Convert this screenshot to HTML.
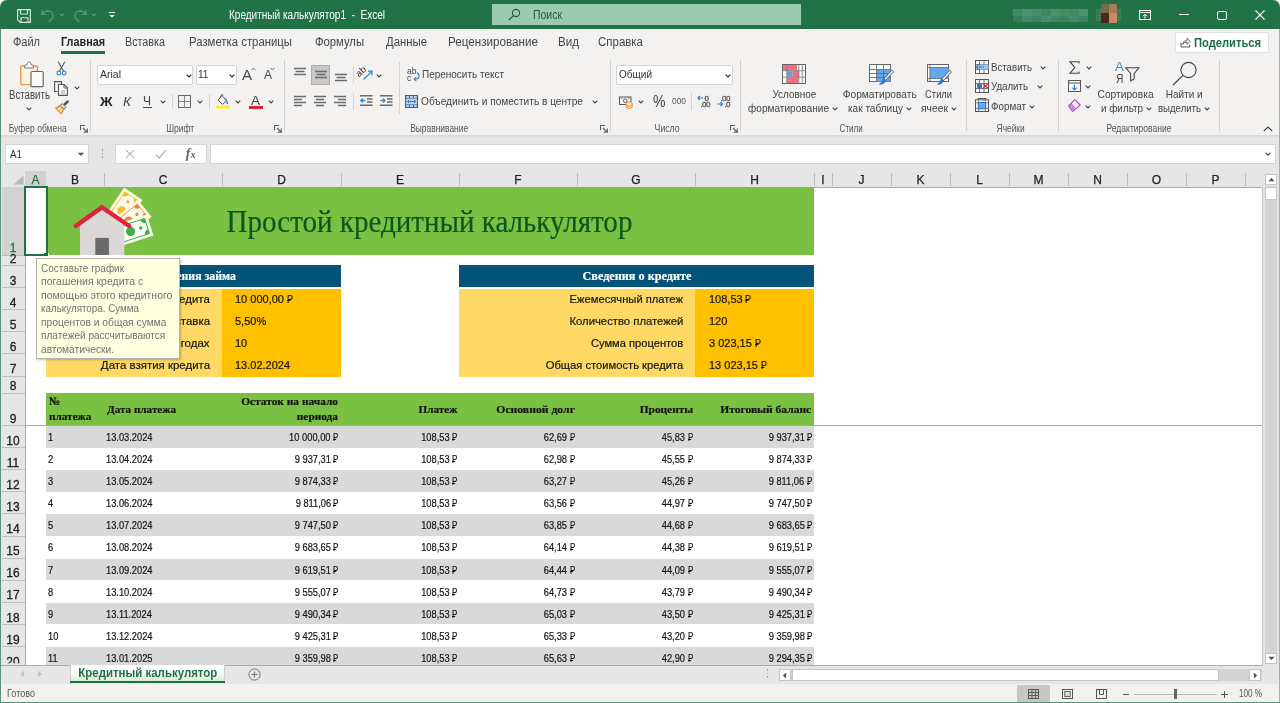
<!DOCTYPE html>
<html><head><meta charset="utf-8"><title>Excel</title>
<style>
*{box-sizing:border-box;margin:0;padding:0}
html,body{width:1280px;height:703px;overflow:hidden;background:#fff}
body{font-family:"Liberation Sans",sans-serif;font-size:12px;color:#262626;position:relative}
.a{position:absolute}
.t{position:absolute;white-space:pre;line-height:1}
.d .t{-webkit-text-stroke:0.2px}
svg{position:absolute;overflow:visible}
.rub{position:relative;display:inline-block}
.rub:after{content:"";position:absolute;left:-0.02em;width:0.42em;bottom:0.33em;height:0.09em;min-height:0.9px;background:currentColor}
</style></head><body><div id="root" style="position:absolute;left:0;top:0;width:1280px;height:703px;will-change:transform;">

<div class="a" style="left:0px;top:0px;width:1280px;height:703px;background:#e6e6e6;"></div>
<div class="a" style="left:0px;top:0px;width:1280px;height:30px;background:#fff;"></div>
<div class="a" style="left:0px;top:0px;width:1280px;height:30px;background:#217346;border-radius:7px 7px 0 0"></div>
<div class="a" style="left:0px;top:29px;width:1280px;height:107px;background:#f3f2f1;"></div>
<div class="a" style="left:0px;top:135px;width:1280px;height:1px;background:#dad9d8;"></div>
<div class="a" style="left:0px;top:136px;width:1280px;height:1px;background:#dedede;"></div>
<div class="a" style="left:0px;top:137px;width:1280px;height:1px;background:#e2e2e2;"></div>
<svg style="left:17px;top:9px" width="14" height="14" viewBox="0 0 14 14"><path d="M0.6 0.6 H13.4 V13.4 H3.2 L0.6 10.8 Z" fill="none" stroke="#d6ede0" stroke-width="1.15" stroke-linejoin="round"/><path d="M3.5 0.6 V5 H10.5 V0.6 M4 13.4 V8.8 H11 V13.4" fill="none" stroke="#d6ede0" stroke-width="1.1"/></svg>
<svg style="left:41px;top:9px" width="13" height="13" viewBox="0 0 13 13"><path d="M1 1 V5.5 H5.5" fill="none" stroke="#5ea27d" stroke-width="1.2"/><path d="M1.3 5.3 Q4 1.5 8 2 Q12 3 12 7 Q12 10 7.5 12.5" fill="none" stroke="#5ea27d" stroke-width="1.2"/></svg>
<svg style="left:58px;top:12px" width="8" height="6" viewBox="0 0 8 6"><path d="M1.9 1.7 L4 3.8 L6.1 1.7" fill="none" stroke="#5ea27d" stroke-width="1.1"/></svg>
<svg style="left:74px;top:9px" width="13" height="13" viewBox="0 0 13 13"><path d="M12 1 V5.5 H7.5" fill="none" stroke="#5ea27d" stroke-width="1.2"/><path d="M11.7 5.3 Q9 1.5 5 2 Q1 3 1 7 Q1 10 5.5 12.5" fill="none" stroke="#5ea27d" stroke-width="1.2"/></svg>
<svg style="left:90px;top:12px" width="8" height="6" viewBox="0 0 8 6"><path d="M1.9 1.7 L4 3.8 L6.1 1.7" fill="none" stroke="#5ea27d" stroke-width="1.1"/></svg>
<svg style="left:108px;top:11px" width="8" height="8" viewBox="0 0 8 8"><path d="M1 1.5 H7" stroke="#fff" stroke-width="1.1"/><path d="M1.2 4 L4 6.8 L6.8 4 Z" fill="#fff"/></svg>
<div class="t" style="left:229.00px;top:8.64px;font-size:12px;color:#fff;transform:scaleX(0.8356);transform-origin:0 0;">Кредитный калькулятор1  -  Excel</div>
<div class="a" style="left:492px;top:4px;width:309px;height:21px;background:#9ccab0;"></div>
<svg style="left:508px;top:8px" width="13" height="13" viewBox="0 0 13 13"><circle cx="8" cy="5" r="3.6" fill="none" stroke="#1e5c3a" stroke-width="1.1"/><path d="M5.4 7.6 L1 12" stroke="#1e5c3a" stroke-width="1.2"/></svg>
<div class="t" style="left:533.00px;top:8.84px;font-size:12px;color:#1e5c3a;transform:scaleX(0.8721);transform-origin:0 0;">Поиск</div>
<div class="a" style="left:1013px;top:9px;width:9.5px;height:7px;background:#3f8a62;"></div>
<div class="a" style="left:1013px;top:16px;width:9.5px;height:6px;background:#387f59;"></div>
<div class="a" style="left:1022.4px;top:9px;width:9.5px;height:7px;background:#4c9470;"></div>
<div class="a" style="left:1022.4px;top:16px;width:9.5px;height:6px;background:#43896a;"></div>
<div class="a" style="left:1031.8px;top:9px;width:9.5px;height:7px;background:#468f6a;"></div>
<div class="a" style="left:1031.8px;top:16px;width:9.5px;height:6px;background:#3b8460;"></div>
<div class="a" style="left:1041.2px;top:9px;width:9.5px;height:7px;background:#3d8860;"></div>
<div class="a" style="left:1041.2px;top:16px;width:9.5px;height:6px;background:#468f6a;"></div>
<div class="a" style="left:1050.6px;top:9px;width:9.5px;height:7px;background:#4a936e;"></div>
<div class="a" style="left:1050.6px;top:16px;width:9.5px;height:6px;background:#3f8a62;"></div>
<div class="a" style="left:1060px;top:9px;width:9.5px;height:7px;background:#43905f;"></div>
<div class="a" style="left:1060px;top:16px;width:9.5px;height:6px;background:#3b8460;"></div>
<div class="a" style="left:1069.4px;top:9px;width:9.5px;height:7px;background:#3f8a62;"></div>
<div class="a" style="left:1069.4px;top:16px;width:9.5px;height:6px;background:#43896a;"></div>
<div class="a" style="left:1078.8px;top:9px;width:9.5px;height:7px;background:#4a936e;"></div>
<div class="a" style="left:1078.8px;top:16px;width:9.5px;height:6px;background:#3a835c;"></div>
<div class="a" style="left:1101px;top:4px;width:8px;height:9px;background:#7b6a4a;"></div>
<div class="a" style="left:1109px;top:4px;width:8px;height:9px;background:#a87c55;"></div>
<div class="a" style="left:1101px;top:13px;width:8px;height:10px;background:#4a2a1c;"></div>
<div class="a" style="left:1109px;top:13px;width:8px;height:10px;background:#c98a60;"></div>
<div class="a" style="left:1096px;top:9px;width:5px;height:12px;background:#3c7c58;"></div>
<div class="a" style="left:1117px;top:9px;width:4px;height:12px;background:#3c7c58;"></div>
<svg style="left:1139px;top:10px" width="12" height="10" viewBox="0 0 12 10"><rect x="0.5" y="0.5" width="11" height="9" fill="none" stroke="#fff" stroke-width="1"/><path d="M0.5 2.5 H11.5" stroke="#fff" stroke-width="1"/><path d="M6 8.5 V4.5 M4 6.2 L6 4.2 L8 6.2" fill="none" stroke="#fff" stroke-width="1"/></svg>
<div class="a" style="left:1179px;top:14px;width:10px;height:1px;background:#fff;"></div>
<div class="a" style="left:1217px;top:10.5px;width:9.5px;height:9px;border:1px solid #fff;border-radius:2px"></div>
<svg style="left:1255px;top:10px" width="10" height="10" viewBox="0 0 10 10"><path d="M0.5 0.5 L9.5 9.5 M9.5 0.5 L0.5 9.5" stroke="#fff" stroke-width="1.1"/></svg>
<div class="t" style="left:13.00px;top:36.02px;font-size:12.5px;color:#444444;transform:scaleX(0.8786);transform-origin:0 0;">Файл</div>
<div class="t" style="left:61.00px;top:36.02px;font-size:12.5px;color:#252525;font-weight:bold;transform:scaleX(0.8655);transform-origin:0 0;">Главная</div>
<div class="t" style="left:125.00px;top:36.02px;font-size:12.5px;color:#444444;transform:scaleX(0.8610);transform-origin:0 0;">Вставка</div>
<div class="t" style="left:189.00px;top:36.02px;font-size:12.5px;color:#444444;transform:scaleX(0.9083);transform-origin:0 0;">Разметка страницы</div>
<div class="t" style="left:315.00px;top:36.02px;font-size:12.5px;color:#444444;transform:scaleX(0.9008);transform-origin:0 0;">Формулы</div>
<div class="t" style="left:386.00px;top:36.02px;font-size:12.5px;color:#444444;transform:scaleX(0.9079);transform-origin:0 0;">Данные</div>
<div class="t" style="left:448.00px;top:36.02px;font-size:12.5px;color:#444444;transform:scaleX(0.9324);transform-origin:0 0;">Рецензирование</div>
<div class="t" style="left:558.00px;top:36.02px;font-size:12.5px;color:#444444;transform:scaleX(0.9286);transform-origin:0 0;">Вид</div>
<div class="t" style="left:598.00px;top:36.02px;font-size:12.5px;color:#444444;transform:scaleX(0.9177);transform-origin:0 0;">Справка</div>
<div class="a" style="left:61px;top:51px;width:44px;height:2.5px;background:#217346;"></div>
<div class="a" style="left:1174.5px;top:32px;width:94px;height:20.5px;background:#fff;border:1px solid #e3e1df;border-radius:2px"></div>
<svg style="left:1180px;top:37px" width="11" height="11" viewBox="0 0 11 11"><path d="M1 5.5 V10 H9.5 V8" fill="none" stroke="#555" stroke-width="1"/><path d="M2.5 7.5 Q3 3.5 7 3.5 V1.2 L10.3 4.5 L7 7.3 V5.3 Q4 5.2 2.5 7.5 Z" fill="none" stroke="#555" stroke-width="0.9"/></svg>
<div class="t" style="left:1194.00px;top:36.84px;font-size:12px;color:#1e6e42;font-weight:bold;transform:scaleX(0.9303);transform-origin:0 0;">Поделиться</div>
<svg style="left:20px;top:61px" width="24" height="27" viewBox="0 0 24 27">
<rect x="0.8" y="5" width="16.6" height="18.6" rx="1" fill="#fdf1df" stroke="#e09a4e" stroke-width="1.4"/>
<path d="M4.8 7 V4.8 Q4.8 4 5.6 4 H6.8 Q7.3 0.8 9.1 0.8 Q10.9 0.8 11.4 4 H12.6 Q13.4 4 13.4 4.8 V7 Z" fill="#fafafa" stroke="#777" stroke-width="1"/>
<rect x="11" y="10.5" width="12.2" height="15.2" rx="1" fill="#fafafa" stroke="#666" stroke-width="1.2"/>
</svg>
<div class="t" style="left:4.07px;top:88.84px;font-size:12px;color:#444444;transform:scaleX(0.8060);transform-origin:50% 0;">Вставить</div>
<svg style="left:25px;top:105.5px" width="8" height="6" viewBox="0 0 8 6"><path d="M1.7 1.7 L4 4.0 L6.3 1.7" fill="none" stroke="#444" stroke-width="1.1"/></svg>
<svg style="left:56px;top:61px" width="11" height="15" viewBox="0 0 11 15"><path d="M2.2 0.8 L7.6 10.2 M8.8 0.8 L3.4 10.2" stroke="#555" stroke-width="1.1" fill="none"/>
<circle cx="2.9" cy="12" r="1.9" fill="none" stroke="#3a8bd8" stroke-width="1.1"/><circle cx="8.1" cy="12" r="1.9" fill="none" stroke="#3a8bd8" stroke-width="1.1"/></svg>
<svg style="left:54px;top:81px" width="15" height="15" viewBox="0 0 15 15"><path d="M3.5 10.5 H0.6 V0.6 H7.5 V3" fill="none" stroke="#555" stroke-width="1.1"/>
<path d="M4.5 3.5 H10.2 L13.4 6.7 V14.4 H4.5 Z" fill="#fafafa" stroke="#555" stroke-width="1.1"/><path d="M10 3.7 V7 H13.2" fill="none" stroke="#555" stroke-width="1"/><path d="M7 10 H11 M7 12 H11" stroke="#888" stroke-width="0.8"/></svg>
<svg style="left:72.5px;top:85px" width="8" height="6" viewBox="0 0 8 6"><path d="M1.7 1.7 L4 4.0 L6.3 1.7" fill="none" stroke="#444" stroke-width="1.1"/></svg>
<svg style="left:55px;top:100px" width="14" height="15" viewBox="0 0 14 15"><path d="M12.6 1.6 L10 4.2" stroke="#555" stroke-width="2.6" stroke-linecap="round"/>
<path d="M7.2 3.6 L10.9 7.3 L9.2 9 L5.5 5.3 Z" fill="#f3f2f1" stroke="#555" stroke-width="1"/>
<path d="M5.3 5.6 L9 9.3 L6.2 13.8 L0.6 8.2 Z" fill="#f6c48c" stroke="#e08a2e" stroke-width="1.1" stroke-linejoin="round"/>
<path d="M3 10.6 L5.2 7.6 M4.8 12.4 L7 9.4" stroke="#fdf1df" stroke-width="0.8"/></svg>
<div class="t" style="left:2.33px;top:122.61px;font-size:10.5px;color:#555;transform:scaleX(0.8129);transform-origin:50% 0;">Буфер обмена</div>
<svg style="left:80px;top:124.5px" width="8" height="8" viewBox="0 0 8 8"><path d="M0.5 5 V0.5 H5" fill="none" stroke="#5a5a5a" stroke-width="1.1"/><path d="M3 3 L7 7 M7.3 3.6 V7.3 H3.6" fill="none" stroke="#5a5a5a" stroke-width="1.1"/></svg>
<div class="a" style="left:90px;top:60px;width:1px;height:71px;background:#d2d0ce;"></div>
<div class="a" style="left:97px;top:65px;width:96px;height:20px;background:#fff;border:1px solid #d6d4d2;border-radius:2px"></div>
<div class="t" style="left:100.00px;top:69.47px;font-size:11.5px;color:#333;transform:scaleX(0.9128);transform-origin:0 0;">Arial</div>
<svg style="left:184.5px;top:72.5px" width="8" height="6" viewBox="0 0 8 6"><path d="M1.7 1.7 L4 4.0 L6.3 1.7" fill="none" stroke="#333" stroke-width="1.21"/></svg>
<div class="a" style="left:196px;top:65px;width:41px;height:20px;background:#fff;border:1px solid #d6d4d2;border-radius:2px"></div>
<div class="t" style="left:198.00px;top:69.47px;font-size:11.5px;color:#333;transform:scaleX(0.8795);transform-origin:0 0;">11</div>
<svg style="left:227.5px;top:72.5px" width="8" height="6" viewBox="0 0 8 6"><path d="M1.7 1.7 L4 4.0 L6.3 1.7" fill="none" stroke="#333" stroke-width="1.21"/></svg>
<div class="t" style="left:241.50px;top:66.88px;font-size:15.5px;color:#444;transform:scaleX(0.9673);transform-origin:0 0;">A</div>
<svg style="left:250.5px;top:67px" width="5" height="4" viewBox="0 0 5 4"><path d="M0.6 3.2 L2.5 1.1 L4.4 3.2" fill="none" stroke="#2b7cd3" stroke-width="1"/></svg>
<div class="t" style="left:263.50px;top:69.42px;font-size:12.5px;color:#444;transform:scaleX(0.9595);transform-origin:0 0;">A</div>
<svg style="left:270px;top:67px" width="5" height="4" viewBox="0 0 5 4"><path d="M0.6 0.9 L2.5 3 L4.4 0.9" fill="none" stroke="#2b7cd3" stroke-width="1"/></svg>
<div class="t" style="left:100.00px;top:94.50px;font-size:13px;color:#222;font-weight:bold;transform:scaleX(1.0639);transform-origin:0 0;">Ж</div>
<div class="t" style="left:122.50px;top:94.50px;font-size:13px;color:#444;font-style:italic;transform:scaleX(1.0442);transform-origin:0 0;">К</div>
<div class="t" style="left:143.00px;top:94.00px;font-size:13px;color:#444;transform:scaleX(0.9233);transform-origin:0 0;">Ч</div>
<div class="a" style="left:143px;top:107px;width:9px;height:1px;background:#444;"></div>
<svg style="left:158.5px;top:98.5px" width="8" height="6" viewBox="0 0 8 6"><path d="M1.7 1.7 L4 4.0 L6.3 1.7" fill="none" stroke="#444" stroke-width="1.1"/></svg>
<div class="a" style="left:172px;top:94px;width:1px;height:15px;background:#d6d4d2;"></div>
<svg style="left:178px;top:95px" width="13" height="13" viewBox="0 0 13 13"><rect x="0.5" y="0.5" width="12" height="12" fill="none" stroke="#666" stroke-width="1"/><path d="M6.5 0.5 V12.5 M0.5 6.5 H12.5" stroke="#888" stroke-width="1"/></svg>
<svg style="left:196px;top:98.5px" width="8" height="6" viewBox="0 0 8 6"><path d="M1.7 1.7 L4 4.0 L6.3 1.7" fill="none" stroke="#444" stroke-width="1.1"/></svg>
<div class="a" style="left:209px;top:94px;width:1px;height:15px;background:#d6d4d2;"></div>
<svg style="left:216px;top:93px" width="14" height="17" viewBox="0 0 14 17"><path d="M5.8 2.6 L11 7.6 L6.4 11.4 L2.2 7.2 Z" fill="#fafafa" stroke="#555" stroke-width="1"/>
<path d="M4.2 4.2 L6 1.2 L7.4 2.4" fill="none" stroke="#555" stroke-width="0.9"/>
<path d="M11 7.4 Q12.6 9.2 12.2 10.6 Q11.4 11.6 10.6 10.6 Q10.2 9.2 11 7.4 Z" fill="#2b7cd3"/>
<path d="M8.5 5.2 L10.9 7.6" stroke="#2b7cd3" stroke-width="1.2"/>
<rect x="0" y="12.5" width="14" height="3.1" fill="#ffeb3b"/></svg>
<svg style="left:233.5px;top:98.5px" width="8" height="6" viewBox="0 0 8 6"><path d="M1.7 1.7 L4 4.0 L6.3 1.7" fill="none" stroke="#444" stroke-width="1.1"/></svg>
<div class="t" style="left:251.00px;top:93.50px;font-size:13px;color:#444;transform:scaleX(1.0379);transform-origin:0 0;">A</div>
<div class="a" style="left:249px;top:105.6px;width:13.5px;height:3px;background:#d9262c;"></div>
<svg style="left:266.5px;top:98.5px" width="8" height="6" viewBox="0 0 8 6"><path d="M1.7 1.7 L4 4.0 L6.3 1.7" fill="none" stroke="#444" stroke-width="1.1"/></svg>
<div class="t" style="left:162.73px;top:122.61px;font-size:10.5px;color:#555;transform:scaleX(0.8105);transform-origin:50% 0;">Шрифт</div>
<svg style="left:274px;top:124.5px" width="8" height="8" viewBox="0 0 8 8"><path d="M0.5 5 V0.5 H5" fill="none" stroke="#5a5a5a" stroke-width="1.1"/><path d="M3 3 L7 7 M7.3 3.6 V7.3 H3.6" fill="none" stroke="#5a5a5a" stroke-width="1.1"/></svg>
<div class="a" style="left:284px;top:60px;width:1px;height:71px;background:#d2d0ce;"></div>
<svg style="left:293.5px;top:68px" width="12" height="9" viewBox="0 0 12 9"><path d="M0.0 0.5 H12.0" stroke="#6a6a6a" stroke-width="1.5"/><path d="M1.5 3.5 H10.5" stroke="#6a6a6a" stroke-width="1.5"/><path d="M0.0 6.5 H12.0" stroke="#6a6a6a" stroke-width="1.5"/></svg>
<div class="a" style="left:311px;top:65px;width:19px;height:20px;background:#c9c8c7;border:1px solid #aeacaa"></div>
<svg style="left:314.5px;top:71px" width="12" height="9" viewBox="0 0 12 9"><path d="M0.0 0.5 H12.0" stroke="#6a6a6a" stroke-width="1.5"/><path d="M1.5 3.5 H10.5" stroke="#6a6a6a" stroke-width="1.5"/><path d="M0.0 6.5 H12.0" stroke="#6a6a6a" stroke-width="1.5"/></svg>
<svg style="left:334.5px;top:73.5px" width="12" height="9" viewBox="0 0 12 9"><path d="M0.0 0.5 H12.0" stroke="#6a6a6a" stroke-width="1.5"/><path d="M1.5 3.5 H10.5" stroke="#6a6a6a" stroke-width="1.5"/><path d="M0.0 6.5 H12.0" stroke="#6a6a6a" stroke-width="1.5"/></svg>
<div class="a" style="left:353px;top:66px;width:1px;height:17px;background:#d6d4d2;"></div>
<div class="t" style="left:359.50px;top:68.96px;font-size:9.5px;color:#333;transform:rotate(-42deg);transform-origin:0 100%;">ab</div>
<svg style="left:362px;top:69px" width="12" height="12" viewBox="0 0 12 12"><path d="M1.5 10.5 L9.8 2.4" stroke="#2f8fc8" stroke-width="1.3"/><path d="M6 2.2 H10 V6.2" fill="none" stroke="#2f8fc8" stroke-width="1.3"/></svg>
<svg style="left:375px;top:72.5px" width="8" height="6" viewBox="0 0 8 6"><path d="M1.7 1.7 L4 4.0 L6.3 1.7" fill="none" stroke="#444" stroke-width="1.1"/></svg>
<div class="a" style="left:399px;top:62px;width:1px;height:52px;background:#d6d4d2;"></div>
<div class="t" style="left:407.00px;top:66.80px;font-size:8.5px;color:#444;">ab</div>
<div class="t" style="left:407.00px;top:73.80px;font-size:8.5px;color:#444;">c</div>
<svg style="left:410px;top:68px" width="10" height="14" viewBox="0 0 10 14"><path d="M7 4.5 Q9.6 6 9 9 Q8 11.5 4.5 11.2" fill="none" stroke="#2b7cd3" stroke-width="1.1"/><path d="M6.3 9.2 L4.2 11.2 L6.3 13.2" fill="none" stroke="#2b7cd3" stroke-width="1.1"/></svg>
<div class="t" style="left:422.00px;top:68.57px;font-size:11.5px;color:#444444;transform:scaleX(0.8674);transform-origin:0 0;">Переносить текст</div>
<svg style="left:294px;top:95.5px" width="12" height="12" viewBox="0 0 12 12"><path d="M0.0 0.5 H12.0" stroke="#6a6a6a" stroke-width="1.5"/><path d="M0.0 3.5 H8.0" stroke="#6a6a6a" stroke-width="1.5"/><path d="M0.0 6.5 H12.0" stroke="#6a6a6a" stroke-width="1.5"/><path d="M0.0 9.5 H8.0" stroke="#6a6a6a" stroke-width="1.5"/></svg>
<svg style="left:314px;top:95.5px" width="12" height="12" viewBox="0 0 12 12"><path d="M0.0 0.5 H12.0" stroke="#6a6a6a" stroke-width="1.5"/><path d="M2.0 3.5 H10.0" stroke="#6a6a6a" stroke-width="1.5"/><path d="M0.0 6.5 H12.0" stroke="#6a6a6a" stroke-width="1.5"/><path d="M2.0 9.5 H10.0" stroke="#6a6a6a" stroke-width="1.5"/></svg>
<svg style="left:334px;top:95.5px" width="12" height="12" viewBox="0 0 12 12"><path d="M0.0 0.5 H12.0" stroke="#6a6a6a" stroke-width="1.5"/><path d="M4.0 3.5 H12.0" stroke="#6a6a6a" stroke-width="1.5"/><path d="M0.0 6.5 H12.0" stroke="#6a6a6a" stroke-width="1.5"/><path d="M4.0 9.5 H12.0" stroke="#6a6a6a" stroke-width="1.5"/></svg>
<div class="a" style="left:353px;top:93px;width:1px;height:17px;background:#d6d4d2;"></div>
<svg style="left:360px;top:95px" width="13" height="12" viewBox="0 0 13 12"><path d="M0 0.7 H12.5 M7 3.9 H12.5 M7 7.1 H12.5 M0 10.3 H12.5" stroke="#6a6a6a" stroke-width="1.5"/><path d="M5.5 5.5 H0.8 M2.8 3.5 L0.8 5.5 L2.8 7.5" fill="none" stroke="#2f8fc8" stroke-width="1.3"/></svg>
<svg style="left:380px;top:95px" width="13" height="12" viewBox="0 0 13 12"><path d="M0 0.7 H12.5 M7 3.9 H12.5 M7 7.1 H12.5 M0 10.3 H12.5" stroke="#6a6a6a" stroke-width="1.5"/><path d="M0.3 5.5 H5 M3 3.5 L5 5.5 L3 7.5" fill="none" stroke="#2f8fc8" stroke-width="1.3"/></svg>
<svg style="left:405px;top:95px" width="13" height="13" viewBox="0 0 13 13"><rect x="0.6" y="0.6" width="11.8" height="11.8" fill="#d9e9f8" stroke="#3b5f80" stroke-width="1.2"/><path d="M0.5 3.3 H12.5 M0.5 9.7 H12.5 M4.5 0.5 V3.3 M8.5 0.5 V3.3 M4.5 9.7 V12.5 M8.5 9.7 V12.5" stroke="#3b5f80" stroke-width="0.9"/><rect x="1.3" y="3.8" width="10.4" height="5.4" fill="#b9d6f2"/><path d="M2.4 6.5 H10.6 M4 5 L2.4 6.5 L4 8 M9 5 L10.6 6.5 L9 8" fill="none" stroke="#2b7cd3" stroke-width="1"/></svg>
<div class="t" style="left:421.00px;top:95.57px;font-size:11.5px;color:#444444;transform:scaleX(0.8812);transform-origin:0 0;">Объединить и поместить в центре</div>
<svg style="left:591px;top:98.5px" width="8" height="6" viewBox="0 0 8 6"><path d="M1.7 1.7 L4 4.0 L6.3 1.7" fill="none" stroke="#444" stroke-width="1.1"/></svg>
<div class="t" style="left:402.86px;top:122.61px;font-size:10.5px;color:#555;transform:scaleX(0.8025);transform-origin:50% 0;">Выравнивание</div>
<svg style="left:600px;top:124.5px" width="8" height="8" viewBox="0 0 8 8"><path d="M0.5 5 V0.5 H5" fill="none" stroke="#5a5a5a" stroke-width="1.1"/><path d="M3 3 L7 7 M7.3 3.6 V7.3 H3.6" fill="none" stroke="#5a5a5a" stroke-width="1.1"/></svg>
<div class="a" style="left:610px;top:60px;width:1px;height:71px;background:#d2d0ce;"></div>
<div class="a" style="left:616px;top:65px;width:117px;height:20px;background:#fff;border:1px solid #d6d4d2;border-radius:2px"></div>
<div class="t" style="left:619.00px;top:69.47px;font-size:11.5px;color:#333;transform:scaleX(0.8721);transform-origin:0 0;">Общий</div>
<svg style="left:723.5px;top:72.5px" width="8" height="6" viewBox="0 0 8 6"><path d="M1.7 1.7 L4 4.0 L6.3 1.7" fill="none" stroke="#333" stroke-width="1.21"/></svg>
<svg style="left:619px;top:96px" width="14" height="13" viewBox="0 0 14 13"><rect x="0.5" y="1" width="11.5" height="7.5" fill="#f3f2f1" stroke="#555" stroke-width="1"/><circle cx="6.2" cy="4.7" r="1.8" fill="none" stroke="#555" stroke-width="0.9"/>
<path d="M2 2.6 H3.2 M9.3 2.6 H10.5" stroke="#555" stroke-width="0.8"/>
<ellipse cx="10.2" cy="7" rx="3" ry="1.2" fill="#fbe3c4" stroke="#e08a2e" stroke-width="0.9"/>
<path d="M7.2 7 V11 Q7.2 12.3 10.2 12.3 Q13.2 12.3 13.2 11 V7" fill="#fbe3c4" stroke="#e08a2e" stroke-width="0.9"/><path d="M7.2 9 Q7.2 10.3 10.2 10.3 Q13.2 10.3 13.2 9" fill="none" stroke="#e08a2e" stroke-width="0.8"/></svg>
<svg style="left:637px;top:98.5px" width="8" height="6" viewBox="0 0 8 6"><path d="M1.7 1.7 L4 4.0 L6.3 1.7" fill="none" stroke="#444" stroke-width="1.1"/></svg>
<div class="t" style="left:652.50px;top:94.26px;font-size:16px;color:#444;transform:scaleX(0.8786);transform-origin:0 0;">%</div>
<div class="t" style="left:672.00px;top:96.46px;font-size:9.5px;color:#555;transform:scaleX(0.8833);transform-origin:0 0;">000</div>
<div class="a" style="left:691px;top:93px;width:1px;height:17px;background:#d6d4d2;"></div>
<svg style="left:697px;top:95.3px" width="14" height="15" viewBox="0 0 14 15"><path d="M6 3 H0.8 M2.8 1 L0.8 3 L2.8 5" fill="none" stroke="#2b7cd3" stroke-width="1.1"/></svg>
<div class="t" style="left:704.50px;top:94.53px;font-size:8px;color:#555;letter-spacing:-0.5px;-webkit-text-stroke:0.3px;">0</div>
<div class="t" style="left:700.50px;top:101.03px;font-size:8px;color:#555;letter-spacing:-0.6px;-webkit-text-stroke:0.3px;">.00</div>
<div class="t" style="left:720.50px;top:94.53px;font-size:8px;color:#555;letter-spacing:-0.6px;-webkit-text-stroke:0.3px;">.00</div>
<svg style="left:717px;top:101px" width="9" height="6" viewBox="0 0 9 6"><path d="M0.3 3 H5.5 M3.5 1 L5.5 3 L3.5 5" fill="none" stroke="#2b7cd3" stroke-width="1.1"/></svg>
<div class="t" style="left:724.50px;top:101.03px;font-size:8px;color:#555;letter-spacing:-0.6px;-webkit-text-stroke:0.3px;">.0</div>
<div class="t" style="left:652.40px;top:122.61px;font-size:10.5px;color:#555;transform:scaleX(0.8279);transform-origin:50% 0;">Число</div>
<svg style="left:730px;top:124.5px" width="8" height="8" viewBox="0 0 8 8"><path d="M0.5 5 V0.5 H5" fill="none" stroke="#5a5a5a" stroke-width="1.1"/><path d="M3 3 L7 7 M7.3 3.6 V7.3 H3.6" fill="none" stroke="#5a5a5a" stroke-width="1.1"/></svg>
<div class="a" style="left:740px;top:60px;width:1px;height:71px;background:#d2d0ce;"></div>
<svg style="left:782px;top:64px" width="24" height="20" viewBox="0 0 24 20"><rect x="0.5" y="0.5" width="23" height="19" fill="#fafafa" stroke="#666" stroke-width="1"/>
<rect x="1" y="1" width="14" height="5.5" fill="#f0707c"/><rect x="10.5" y="7" width="6.5" height="6" fill="#f0707c"/><rect x="5" y="13.5" width="11.5" height="5.5" fill="#f0707c"/>
<rect x="5" y="7.2" width="5.5" height="5.6" fill="#6f9bd8"/>
<path d="M0.5 6.7 H23.5 M0.5 13.2 H23.5 M4.7 0.5 V19.5 M16.8 0.5 V19.5 M20.3 0.5 V19.5" stroke="#777" stroke-width="0.8"/></svg>
<div class="t" style="left:768.61px;top:88.77px;font-size:11.5px;color:#444444;transform:scaleX(0.8666);transform-origin:50% 0;">Условное</div>
<div class="t" style="left:748.00px;top:102.77px;font-size:11.5px;color:#444444;transform:scaleX(0.8773);transform-origin:0 0;">форматирование</div>
<svg style="left:831px;top:105.5px" width="8" height="6" viewBox="0 0 8 6"><path d="M1.7 1.7 L4 4.0 L6.3 1.7" fill="none" stroke="#444" stroke-width="1.1"/></svg>
<svg style="left:869px;top:63px" width="26" height="24" viewBox="0 0 26 24"><rect x="0.5" y="1.5" width="21" height="17" fill="#fafafa" stroke="#666" stroke-width="1"/>
<rect x="7.5" y="6.5" width="14" height="12" fill="#63a8ea"/>
<path d="M0.5 6.5 H21.5 M0.5 10.5 H21.5 M0.5 14.5 H21.5 M7.5 1.5 V18.5 M14.5 1.5 V18.5" stroke="#666" stroke-width="0.8"/>
<path d="M22.8 7.2 L24.6 8.8 L16.6 17.4 L14.8 15.8 Z" fill="#f3f2f1" stroke="#555" stroke-width="0.9"/>
<path d="M14.6 15.6 L16.8 17.6 Q15 21.5 10.5 21.3 Q13.2 19.3 14.6 15.6 Z" fill="#2b7cd3" stroke="#2467b0" stroke-width="0.7"/></svg>
<div class="t" style="left:838.28px;top:88.77px;font-size:11.5px;color:#444444;transform:scaleX(0.8868);transform-origin:50% 0;">Форматировать</div>
<div class="t" style="left:848.00px;top:102.77px;font-size:11.5px;color:#444444;transform:scaleX(0.8733);transform-origin:0 0;">как таблицу</div>
<svg style="left:904.5px;top:105.5px" width="8" height="6" viewBox="0 0 8 6"><path d="M1.7 1.7 L4 4.0 L6.3 1.7" fill="none" stroke="#444" stroke-width="1.1"/></svg>
<svg style="left:927px;top:63px" width="26" height="24" viewBox="0 0 26 24"><rect x="0.5" y="1.5" width="21" height="17" fill="#fafafa" stroke="#666" stroke-width="1"/>
<rect x="3" y="4.5" width="18.5" height="11" fill="#63a8ea"/>
<path d="M0.5 4.5 H21.5 M0.5 15.5 H21.5 M3 1.5 V18.5 " stroke="#666" stroke-width="0.8"/>
<path d="M22.8 7.2 L24.6 8.8 L16.6 17.4 L14.8 15.8 Z" fill="#f3f2f1" stroke="#555" stroke-width="0.9"/>
<path d="M14.6 15.6 L16.8 17.6 Q15 21.5 10.5 21.3 Q13.2 19.3 14.6 15.6 Z" fill="#2b7cd3" stroke="#2467b0" stroke-width="0.7"/></svg>
<div class="t" style="left:921.93px;top:88.77px;font-size:11.5px;color:#444444;transform:scaleX(0.8150);transform-origin:50% 0;">Стили</div>
<div class="t" style="left:921.00px;top:102.77px;font-size:11.5px;color:#444444;transform:scaleX(0.8988);transform-origin:0 0;">ячеек</div>
<svg style="left:949.5px;top:105.5px" width="8" height="6" viewBox="0 0 8 6"><path d="M1.7 1.7 L4 4.0 L6.3 1.7" fill="none" stroke="#444" stroke-width="1.1"/></svg>
<div class="t" style="left:836.38px;top:122.61px;font-size:10.5px;color:#555;transform:scaleX(0.7604);transform-origin:50% 0;">Стили</div>
<div class="a" style="left:966px;top:60px;width:1px;height:71px;background:#d2d0ce;"></div>
<svg style="left:975px;top:60px" width="14" height="14" viewBox="0 0 14 14"><rect x="0.5" y="0.5" width="13" height="13" fill="#fafafa" stroke="#555" stroke-width="1"/><path d="M0.5 4.5 H13.5 M0.5 9.5 H13.5 M4.5 0.5 V13.5 M9 0.5 V13.5" stroke="#555" stroke-width="0.8"/>
<rect x="4.5" y="4.5" width="9" height="5" fill="#9cc6ee"/><path d="M9 7 H1.2 M3.4 5 L1.2 7 L3.4 9" fill="none" stroke="#2b7cd3" stroke-width="1.1"/></svg>
<div class="t" style="left:991.00px;top:61.57px;font-size:11.5px;color:#444444;transform:scaleX(0.8411);transform-origin:0 0;">Вставить</div>
<svg style="left:1039px;top:64.5px" width="8" height="6" viewBox="0 0 8 6"><path d="M1.7 1.7 L4 4.0 L6.3 1.7" fill="none" stroke="#444" stroke-width="1.1"/></svg>
<svg style="left:975px;top:79px" width="14" height="14" viewBox="0 0 14 14"><rect x="0.5" y="0.5" width="13" height="13" fill="#fafafa" stroke="#555" stroke-width="1"/><path d="M0.5 4.5 H13.5 M0.5 9.5 H13.5 M4.5 0.5 V13.5 M9 0.5 V13.5" stroke="#555" stroke-width="0.8"/>
<rect x="2" y="4.5" width="5" height="5" fill="#4472c4"/><path d="M8.3 4.8 L12.7 9.2 M12.7 4.8 L8.3 9.2" stroke="#d9262c" stroke-width="1.2"/></svg>
<div class="t" style="left:991.00px;top:81.07px;font-size:11.5px;color:#444444;transform:scaleX(0.8427);transform-origin:0 0;">Удалить</div>
<svg style="left:1036px;top:83.5px" width="8" height="6" viewBox="0 0 8 6"><path d="M1.7 1.7 L4 4.0 L6.3 1.7" fill="none" stroke="#444" stroke-width="1.1"/></svg>
<svg style="left:975px;top:98px" width="14" height="14" viewBox="0 0 14 14"><rect x="0.5" y="1.8" width="13" height="11.7" fill="#fafafa" stroke="#555" stroke-width="1"/><path d="M0.5 4.8 H13.5 M0.5 10.5 H13.5 M3.6 1.8 V13.5 M10.4 1.8 V13.5" stroke="#666" stroke-width="0.8"/>
<rect x="3.2" y="4.4" width="7.6" height="6.5" fill="#63a8ea" stroke="#2b6cb0" stroke-width="0.8"/><path d="M2.5 0.5 H11.5" stroke="#555" stroke-width="1"/></svg>
<div class="t" style="left:991.00px;top:100.57px;font-size:11.5px;color:#444444;transform:scaleX(0.8568);transform-origin:0 0;">Формат</div>
<svg style="left:1028px;top:103.5px" width="8" height="6" viewBox="0 0 8 6"><path d="M1.7 1.7 L4 4.0 L6.3 1.7" fill="none" stroke="#444" stroke-width="1.1"/></svg>
<div class="t" style="left:993.39px;top:122.61px;font-size:10.5px;color:#555;transform:scaleX(0.7951);transform-origin:50% 0;">Ячейки</div>
<div class="a" style="left:1058px;top:60px;width:1px;height:71px;background:#d2d0ce;"></div>
<svg style="left:1069px;top:61px" width="11" height="13" viewBox="0 0 11 13"><path d="M10 2.6 V0.7 H0.9 L5.8 6.5 L0.9 12.3 H10 V10.4" fill="none" stroke="#444" stroke-width="1.1"/></svg>
<svg style="left:1085px;top:64.5px" width="8" height="6" viewBox="0 0 8 6"><path d="M1.7 1.7 L4 4.0 L6.3 1.7" fill="none" stroke="#444" stroke-width="1.1"/></svg>
<svg style="left:1068px;top:80px" width="13" height="12" viewBox="0 0 13 12"><rect x="0.5" y="0.5" width="12" height="11" fill="#fafafa" stroke="#555" stroke-width="1"/><path d="M0.5 3 H12.5" stroke="#555" stroke-width="1"/><path d="M6.5 4.5 V9.8 M4.3 7.7 L6.5 9.9 L8.7 7.7" fill="none" stroke="#2b7cd3" stroke-width="1.1"/></svg>
<svg style="left:1083.5px;top:83.5px" width="8" height="6" viewBox="0 0 8 6"><path d="M1.7 1.7 L4 4.0 L6.3 1.7" fill="none" stroke="#444" stroke-width="1.1"/></svg>
<svg style="left:1068px;top:99px" width="13" height="13" viewBox="0 0 13 13"><path d="M6.8 0.6 L12.2 6 L4.6 12.4 L0.6 7 Z" fill="#fbf4fc" stroke="#b24cc4" stroke-width="1.1" stroke-linejoin="round"/><path d="M0.6 7 L3 4.5 L7.6 9.9 L4.6 12.4 Z" fill="#d28ade" stroke="#b24cc4" stroke-width="0.9" stroke-linejoin="round"/></svg>
<svg style="left:1083.5px;top:103.5px" width="8" height="6" viewBox="0 0 8 6"><path d="M1.7 1.7 L4 4.0 L6.3 1.7" fill="none" stroke="#444" stroke-width="1.1"/></svg>
<div class="t" style="left:1114.80px;top:60.37px;font-size:13.5px;color:#3a8fd0;transform:scaleX(0.9773);transform-origin:0 0;">A</div>
<div class="t" style="left:1115.80px;top:73.02px;font-size:12.5px;color:#444;transform:scaleX(0.8197);transform-origin:0 0;">Я</div>
<svg style="left:1125px;top:67px" width="15" height="15" viewBox="0 0 15 15"><path d="M0.8 0.8 H14 L9.2 6.5 V12 L5.6 13.8 V6.5 Z" fill="none" stroke="#444" stroke-width="1.1"/></svg>
<div class="t" style="left:1094.44px;top:88.77px;font-size:11.5px;color:#444444;transform:scaleX(0.8873);transform-origin:50% 0;">Сортировка</div>
<div class="t" style="left:1100.50px;top:102.77px;font-size:11.5px;color:#444444;transform:scaleX(0.8577);transform-origin:0 0;">и фильтр</div>
<svg style="left:1144.5px;top:105.5px" width="8" height="6" viewBox="0 0 8 6"><path d="M1.7 1.7 L4 4.0 L6.3 1.7" fill="none" stroke="#444" stroke-width="1.1"/></svg>
<svg style="left:1172px;top:61px" width="26" height="24" viewBox="0 0 26 24"><circle cx="16.5" cy="9" r="7.6" fill="none" stroke="#444" stroke-width="1.1"/><path d="M11 14.4 L1 24" stroke="#444" stroke-width="1.2"/></svg>
<div class="t" style="left:1163.28px;top:88.77px;font-size:11.5px;color:#444444;transform:scaleX(0.8719);transform-origin:50% 0;">Найти и</div>
<div class="t" style="left:1158.00px;top:102.77px;font-size:11.5px;color:#444444;transform:scaleX(0.8351);transform-origin:0 0;">выделить</div>
<svg style="left:1203px;top:105.5px" width="8" height="6" viewBox="0 0 8 6"><path d="M1.7 1.7 L4 4.0 L6.3 1.7" fill="none" stroke="#444" stroke-width="1.1"/></svg>
<div class="t" style="left:1098.51px;top:122.61px;font-size:10.5px;color:#555;transform:scaleX(0.8126);transform-origin:50% 0;">Редактирование</div>
<div class="a" style="left:1219px;top:60px;width:1px;height:71px;background:#d2d0ce;"></div>
<svg style="left:1263px;top:126px" width="10" height="6" viewBox="0 0 10 6"><path d="M0.8 5 L5 1 L9.2 5" fill="none" stroke="#444" stroke-width="1.1"/></svg>
<div class="a" style="left:5px;top:144px;width:84px;height:20px;background:#fff;border:1px solid #d4d4d4"></div>
<div class="t" style="left:10.00px;top:148.57px;font-size:11.5px;color:#333;transform:scaleX(0.8531);transform-origin:0 0;">A1</div>
<svg style="left:77px;top:152px" width="8" height="5" viewBox="0 0 8 5"><path d="M0.8 0.8 L4 4 L7.2 0.8 Z" fill="#555"/></svg>
<div class="a" style="left:101.5px;top:149px;width:1.6px;height:1.6px;background:#999;"></div>
<div class="a" style="left:101.5px;top:152.5px;width:1.6px;height:1.6px;background:#999;"></div>
<div class="a" style="left:101.5px;top:156px;width:1.6px;height:1.6px;background:#999;"></div>
<div class="a" style="left:115px;top:144px;width:92px;height:20px;background:#fff;border:1px solid #d4d4d4"></div>
<svg style="left:125px;top:149px" width="10" height="10" viewBox="0 0 10 10"><path d="M0.8 0.8 L9.2 9.2 M9.2 0.8 L0.8 9.2" stroke="#b0b0b0" stroke-width="1.1"/></svg>
<svg style="left:155px;top:149px" width="12" height="10" viewBox="0 0 12 10"><path d="M0.8 5.5 L4.2 9 L11 1" fill="none" stroke="#b0b0b0" stroke-width="1.2"/></svg>
<div class="t" style="left:185.80px;top:146.78px;font-size:14px;color:#666;font-family:'Liberation Serif',serif;font-weight:bold;font-style:italic;">f</div>
<div class="t" style="left:190.60px;top:150.21px;font-size:10.5px;color:#666;font-family:'Liberation Serif',serif;font-weight:bold;font-style:italic;">x</div>
<div class="a" style="left:210px;top:144px;width:1066px;height:20px;background:#fff;border:1px solid #d4d4d4"></div>
<svg style="left:1264px;top:151px" width="8" height="6" viewBox="0 0 8 6"><path d="M1.6 1.7 L4 4.1 L6.4 1.7" fill="none" stroke="#555" stroke-width="1.21"/></svg>
<div class="a" style="left:25px;top:171px;width:1238px;height:494px;background:#fff;"></div>
<div class="a" style="left:0px;top:171px;width:1263px;height:16px;background:#e6e6e6;"></div>
<div class="a" style="left:0px;top:186.5px;width:1263px;height:1px;background:#ababab;"></div>
<div class="a" style="left:25px;top:171px;width:21px;height:15.5px;background:#d2d2d2;"></div>
<div class="a" style="left:25px;top:186px;width:21px;height:1px;background:#217346;"></div>
<div class="t" style="left:31.50px;top:174.14px;font-size:12px;color:#217346;-webkit-text-stroke:0.25px;">A</div>
<div class="t" style="left:71.00px;top:174.14px;font-size:12px;color:#222;-webkit-text-stroke:0.25px;">B</div>
<div class="a" style="left:103.5px;top:173px;width:1px;height:13px;background:#bdbdbd;"></div>
<div class="t" style="left:158.67px;top:174.14px;font-size:12px;color:#222;-webkit-text-stroke:0.25px;">C</div>
<div class="a" style="left:221.5px;top:173px;width:1px;height:13px;background:#bdbdbd;"></div>
<div class="t" style="left:277.17px;top:174.14px;font-size:12px;color:#222;-webkit-text-stroke:0.25px;">D</div>
<div class="a" style="left:340.5px;top:173px;width:1px;height:13px;background:#bdbdbd;"></div>
<div class="t" style="left:396.00px;top:174.14px;font-size:12px;color:#222;-webkit-text-stroke:0.25px;">E</div>
<div class="a" style="left:458.5px;top:173px;width:1px;height:13px;background:#bdbdbd;"></div>
<div class="t" style="left:514.33px;top:174.14px;font-size:12px;color:#222;-webkit-text-stroke:0.25px;">F</div>
<div class="a" style="left:576.5px;top:173px;width:1px;height:13px;background:#bdbdbd;"></div>
<div class="t" style="left:631.33px;top:174.14px;font-size:12px;color:#222;-webkit-text-stroke:0.25px;">G</div>
<div class="a" style="left:694.5px;top:173px;width:1px;height:13px;background:#bdbdbd;"></div>
<div class="t" style="left:750.17px;top:174.14px;font-size:12px;color:#222;-webkit-text-stroke:0.25px;">H</div>
<div class="a" style="left:813.5px;top:173px;width:1px;height:13px;background:#bdbdbd;"></div>
<div class="t" style="left:821.33px;top:174.14px;font-size:12px;color:#222;-webkit-text-stroke:0.25px;">I</div>
<div class="a" style="left:831.5px;top:173px;width:1px;height:13px;background:#bdbdbd;"></div>
<div class="t" style="left:858.50px;top:174.14px;font-size:12px;color:#222;-webkit-text-stroke:0.25px;">J</div>
<div class="a" style="left:890.5px;top:173px;width:1px;height:13px;background:#bdbdbd;"></div>
<div class="t" style="left:916.50px;top:174.14px;font-size:12px;color:#222;-webkit-text-stroke:0.25px;">K</div>
<div class="a" style="left:949.5px;top:173px;width:1px;height:13px;background:#bdbdbd;"></div>
<div class="t" style="left:976.16px;top:174.14px;font-size:12px;color:#222;-webkit-text-stroke:0.25px;">L</div>
<div class="a" style="left:1008.5px;top:173px;width:1px;height:13px;background:#bdbdbd;"></div>
<div class="t" style="left:1033.50px;top:174.14px;font-size:12px;color:#222;-webkit-text-stroke:0.25px;">M</div>
<div class="a" style="left:1067.5px;top:173px;width:1px;height:13px;background:#bdbdbd;"></div>
<div class="t" style="left:1093.17px;top:174.14px;font-size:12px;color:#222;-webkit-text-stroke:0.25px;">N</div>
<div class="a" style="left:1126.5px;top:173px;width:1px;height:13px;background:#bdbdbd;"></div>
<div class="t" style="left:1151.83px;top:174.14px;font-size:12px;color:#222;-webkit-text-stroke:0.25px;">O</div>
<div class="a" style="left:1185.5px;top:173px;width:1px;height:13px;background:#bdbdbd;"></div>
<div class="t" style="left:1211.50px;top:174.14px;font-size:12px;color:#222;-webkit-text-stroke:0.25px;">P</div>
<div class="a" style="left:1244.5px;top:173px;width:1px;height:13px;background:#bdbdbd;"></div>
<div class="a" style="left:1262.5px;top:173px;width:1px;height:13px;background:#bdbdbd;"></div>
<svg style="left:13px;top:175px" width="11" height="10" viewBox="0 0 11 10"><path d="M10.5 0.5 V9.5 H0.8 Z" fill="#b8b8b8"/></svg>
<div class="a" style="left:0px;top:187px;width:25px;height:478px;background:#e6e6e6;"></div>
<div class="a" style="left:24.5px;top:187px;width:1px;height:478px;background:#ababab;"></div>
<div class="a" style="left:2px;top:187px;width:22.5px;height:68px;background:#d2d2d2;"></div>
<div class="a" style="left:2px;top:254.5px;width:23px;height:1px;background:#bdbdbd;"></div>
<div class="t" style="left:9.66px;top:242.04px;font-size:12px;color:#217346;-webkit-text-stroke:0.3px;clip-path:inset(0 0 0.0px 0);">1</div>
<div class="a" style="left:2px;top:265px;width:23px;height:1px;background:#bdbdbd;"></div>
<div class="t" style="left:9.66px;top:252.94px;font-size:12px;color:#222;-webkit-text-stroke:0.3px;clip-path:inset(0 0 0.0px 0);">2</div>
<div class="a" style="left:2px;top:287.2px;width:23px;height:1px;background:#bdbdbd;"></div>
<div class="t" style="left:9.66px;top:274.74px;font-size:12px;color:#222;-webkit-text-stroke:0.3px;clip-path:inset(0 0 0.0px 0);">3</div>
<div class="a" style="left:2px;top:309.3px;width:23px;height:1px;background:#bdbdbd;"></div>
<div class="t" style="left:9.66px;top:296.84px;font-size:12px;color:#222;-webkit-text-stroke:0.3px;clip-path:inset(0 0 0.0px 0);">4</div>
<div class="a" style="left:2px;top:331.3px;width:23px;height:1px;background:#bdbdbd;"></div>
<div class="t" style="left:9.66px;top:318.84px;font-size:12px;color:#222;-webkit-text-stroke:0.3px;clip-path:inset(0 0 0.0px 0);">5</div>
<div class="a" style="left:2px;top:353.4px;width:23px;height:1px;background:#bdbdbd;"></div>
<div class="t" style="left:9.66px;top:340.94px;font-size:12px;color:#222;-webkit-text-stroke:0.3px;clip-path:inset(0 0 0.0px 0);">6</div>
<div class="a" style="left:2px;top:375.5px;width:23px;height:1px;background:#bdbdbd;"></div>
<div class="t" style="left:9.66px;top:363.04px;font-size:12px;color:#222;-webkit-text-stroke:0.3px;clip-path:inset(0 0 0.0px 0);">7</div>
<div class="a" style="left:2px;top:392.5px;width:23px;height:1px;background:#bdbdbd;"></div>
<div class="t" style="left:9.66px;top:380.04px;font-size:12px;color:#222;-webkit-text-stroke:0.3px;clip-path:inset(0 0 0.0px 0);">8</div>
<div class="a" style="left:2px;top:425px;width:23px;height:1px;background:#bdbdbd;"></div>
<div class="t" style="left:9.66px;top:412.54px;font-size:12px;color:#222;-webkit-text-stroke:0.3px;clip-path:inset(0 0 0.0px 0);">9</div>
<div class="a" style="left:2px;top:447.11px;width:23px;height:1px;background:#bdbdbd;"></div>
<div class="t" style="left:6.33px;top:434.65px;font-size:12px;color:#222;-webkit-text-stroke:0.3px;clip-path:inset(0 0 0.0px 0);">10</div>
<div class="a" style="left:2px;top:469.22px;width:23px;height:1px;background:#bdbdbd;"></div>
<div class="t" style="left:6.77px;top:456.76px;font-size:12px;color:#222;-webkit-text-stroke:0.3px;clip-path:inset(0 0 0.0px 0);">11</div>
<div class="a" style="left:2px;top:491.33px;width:23px;height:1px;background:#bdbdbd;"></div>
<div class="t" style="left:6.33px;top:478.87px;font-size:12px;color:#222;-webkit-text-stroke:0.3px;clip-path:inset(0 0 0.0px 0);">12</div>
<div class="a" style="left:2px;top:513.44px;width:23px;height:1px;background:#bdbdbd;"></div>
<div class="t" style="left:6.33px;top:500.98px;font-size:12px;color:#222;-webkit-text-stroke:0.3px;clip-path:inset(0 0 0.0px 0);">13</div>
<div class="a" style="left:2px;top:535.55px;width:23px;height:1px;background:#bdbdbd;"></div>
<div class="t" style="left:6.33px;top:523.09px;font-size:12px;color:#222;-webkit-text-stroke:0.3px;clip-path:inset(0 0 0.0px 0);">14</div>
<div class="a" style="left:2px;top:557.66px;width:23px;height:1px;background:#bdbdbd;"></div>
<div class="t" style="left:6.33px;top:545.20px;font-size:12px;color:#222;-webkit-text-stroke:0.3px;clip-path:inset(0 0 0.0px 0);">15</div>
<div class="a" style="left:2px;top:579.77px;width:23px;height:1px;background:#bdbdbd;"></div>
<div class="t" style="left:6.33px;top:567.31px;font-size:12px;color:#222;-webkit-text-stroke:0.3px;clip-path:inset(0 0 0.0px 0);">16</div>
<div class="a" style="left:2px;top:601.88px;width:23px;height:1px;background:#bdbdbd;"></div>
<div class="t" style="left:6.33px;top:589.42px;font-size:12px;color:#222;-webkit-text-stroke:0.3px;clip-path:inset(0 0 0.0px 0);">17</div>
<div class="a" style="left:2px;top:623.99px;width:23px;height:1px;background:#bdbdbd;"></div>
<div class="t" style="left:6.33px;top:611.53px;font-size:12px;color:#222;-webkit-text-stroke:0.3px;clip-path:inset(0 0 0.0px 0);">18</div>
<div class="a" style="left:2px;top:646.1px;width:23px;height:1px;background:#bdbdbd;"></div>
<div class="t" style="left:6.33px;top:633.64px;font-size:12px;color:#222;-webkit-text-stroke:0.3px;clip-path:inset(0 0 0.0px 0);">19</div>
<div class="t" style="left:6.33px;top:655.75px;font-size:12px;color:#222;-webkit-text-stroke:0.3px;clip-path:inset(0 0 4.4px 0);">20</div>
<div class="d">
<div class="a" style="left:46px;top:187px;width:768px;height:68px;background:#7ac143;"></div>
<div class="t" style="left:215.23px;top:206.59px;font-size:30.7px;color:#0b561d;font-family:'Liberation Serif',serif;transform:scaleX(0.9461);transform-origin:50% 0;">Простой кредитный калькулятор</div>
<div class="a" style="left:24px;top:186px;width:23.5px;height:70px;border:2px solid #217346;background:#fff"></div>
<div class="a" style="left:43.5px;top:252.5px;width:5px;height:4.5px;background:#fff;"></div>
<div class="a" style="left:44.3px;top:253.2px;width:3.6px;height:3.3px;background:#1e6b41;"></div>
<div class="a" style="left:46px;top:265px;width:295px;height:22px;background:#04547a;"></div>
<div class="a" style="left:459px;top:265px;width:355px;height:22px;background:#04547a;"></div>
<div class="t" style="left:146.45px;top:269.41px;font-size:13px;color:#fff;font-family:'Liberation Serif',serif;font-weight:bold;transform:scaleX(0.9139);transform-origin:50% 0;">Сведения займа</div>
<div class="t" style="left:578.55px;top:269.41px;font-size:13px;color:#fff;font-family:'Liberation Serif',serif;font-weight:bold;transform:scaleX(0.9404);transform-origin:50% 0;">Сведения о кредите</div>
<div class="a" style="left:46px;top:289px;width:176px;height:87.5px;background:#ffd966;"></div>
<div class="a" style="left:222px;top:289px;width:119px;height:87.5px;background:#ffc000;"></div>
<div class="a" style="left:459px;top:289px;width:236px;height:87.5px;background:#ffd966;"></div>
<div class="a" style="left:695px;top:289px;width:119px;height:87.5px;background:#ffc000;"></div>
<div class="t" style="left:130.01px;top:293.98px;font-size:11.25px;color:#151515;transform:scaleX(1.0200);transform-origin:100% 0;">Сумма кредита</div>
<div class="t" style="left:569.09px;top:293.98px;font-size:11.25px;color:#151515;transform:scaleX(0.9946);transform-origin:100% 0;">Ежемесячный платеж</div>
<div class="t" style="left:235.00px;top:294.04px;font-size:10.7px;color:#151515;transform:scaleX(1.0300);transform-origin:0 0;">10 000,00</div>
<div class="t" style="left:286.63px;top:294.04px;font-size:10.7px;color:#151515;transform:scaleX(0.8500);transform-origin:0 0;"><span class="rub">P</span></div>
<div class="t" style="left:709.00px;top:294.04px;font-size:10.7px;color:#151515;transform:scaleX(1.0300);transform-origin:0 0;">108,53</div>
<div class="t" style="left:745.31px;top:294.04px;font-size:10.7px;color:#151515;transform:scaleX(0.8500);transform-origin:0 0;"><span class="rub">P</span></div>
<div class="t" style="left:65.76px;top:316.18px;font-size:11.25px;color:#151515;transform:scaleX(1.0200);transform-origin:100% 0;">Годовая процентная ставка</div>
<div class="t" style="left:569.57px;top:316.18px;font-size:11.25px;color:#151515;transform:scaleX(1.0050);transform-origin:100% 0;">Количество платежей</div>
<div class="t" style="left:235.00px;top:316.24px;font-size:10.7px;color:#151515;transform:scaleX(1.0300);transform-origin:0 0;">5,50%</div>
<div class="t" style="left:709.00px;top:316.24px;font-size:10.7px;color:#151515;transform:scaleX(1.0300);transform-origin:0 0;">120</div>
<div class="t" style="left:99.26px;top:338.18px;font-size:11.25px;color:#151515;transform:scaleX(1.0200);transform-origin:100% 0;">Срок кредита в годах</div>
<div class="t" style="left:589.87px;top:338.18px;font-size:11.25px;color:#151515;transform:scaleX(0.9901);transform-origin:100% 0;">Сумма процентов</div>
<div class="t" style="left:235.00px;top:338.24px;font-size:10.7px;color:#151515;transform:scaleX(1.0300);transform-origin:0 0;">10</div>
<div class="t" style="left:709.00px;top:338.24px;font-size:10.7px;color:#151515;transform:scaleX(1.0300);transform-origin:0 0;">3 023,15</div>
<div class="t" style="left:754.50px;top:338.24px;font-size:10.7px;color:#151515;transform:scaleX(0.8500);transform-origin:0 0;"><span class="rub">P</span></div>
<div class="t" style="left:102.69px;top:360.38px;font-size:11.25px;color:#151515;transform:scaleX(1.0200);transform-origin:100% 0;">Дата взятия кредита</div>
<div class="t" style="left:544.81px;top:360.38px;font-size:11.25px;color:#151515;transform:scaleX(0.9950);transform-origin:100% 0;">Общая стоимость кредита</div>
<div class="t" style="left:235.00px;top:360.44px;font-size:10.7px;color:#151515;transform:scaleX(1.0300);transform-origin:0 0;">13.02.2024</div>
<div class="t" style="left:709.00px;top:360.44px;font-size:10.7px;color:#151515;transform:scaleX(1.0300);transform-origin:0 0;">13 023,15</div>
<div class="t" style="left:760.63px;top:360.44px;font-size:10.7px;color:#151515;transform:scaleX(0.8500);transform-origin:0 0;"><span class="rub">P</span></div>
<div class="a" style="left:46px;top:393px;width:768px;height:32.5px;background:#7ac143;"></div>
<div class="t" style="left:48.50px;top:396.34px;font-size:11.3px;color:#111;font-family:'Liberation Serif',serif;font-weight:bold;transform:scaleX(0.9599);transform-origin:0 0;">№</div>
<div class="t" style="left:48.50px;top:411.34px;font-size:11.3px;color:#111;font-family:'Liberation Serif',serif;font-weight:bold;transform:scaleX(0.9949);transform-origin:0 0;">платежа</div>
<div class="t" style="left:106.50px;top:404.04px;font-size:11.3px;color:#111;font-family:'Liberation Serif',serif;font-weight:bold;transform:scaleX(0.9869);transform-origin:0 0;">Дата платежа</div>
<div class="t" style="left:241.96px;top:396.34px;font-size:11.3px;color:#111;font-family:'Liberation Serif',serif;font-weight:bold;transform:scaleX(1.0089);transform-origin:100% 0;">Остаток на начало</div>
<div class="t" style="left:296.99px;top:411.34px;font-size:11.3px;color:#111;font-family:'Liberation Serif',serif;font-weight:bold;transform:scaleX(1.0046);transform-origin:100% 0;">периода</div>
<div class="t" style="left:417.75px;top:404.04px;font-size:11.3px;color:#111;font-family:'Liberation Serif',serif;font-weight:bold;transform:scaleX(0.9886);transform-origin:100% 0;">Платеж</div>
<div class="t" style="left:499.03px;top:404.04px;font-size:11.3px;color:#111;font-family:'Liberation Serif',serif;font-weight:bold;transform:scaleX(1.0359);transform-origin:100% 0;">Основной долг</div>
<div class="t" style="left:639.87px;top:404.04px;font-size:11.3px;color:#111;font-family:'Liberation Serif',serif;font-weight:bold;transform:scaleX(1.0050);transform-origin:100% 0;">Проценты</div>
<div class="t" style="left:722.26px;top:404.04px;font-size:11.3px;color:#111;font-family:'Liberation Serif',serif;font-weight:bold;transform:scaleX(1.0198);transform-origin:100% 0;">Итоговый баланс</div>
<div class="a" style="left:25px;top:425px;width:1238px;height:1px;background:#a6a6a6;"></div>
<div class="a d" style="left:0;top:426px;width:1263px;height:238.5px;overflow:hidden">
<div class="a" style="left:46px;top:0px;width:768px;height:21.6px;background:#d9d9d9;"></div>
<div class="t" style="left:48.00px;top:6.93px;font-size:10px;color:#151515;transform:scaleX(0.9300);transform-origin:0 0;">1</div>
<div class="t" style="left:106.40px;top:6.93px;font-size:10px;color:#151515;transform:scaleX(0.9300);transform-origin:0 0;">13.03.2024</div>
<div class="t" style="left:333.06px;top:6.93px;font-size:10px;color:#151515;transform:scaleX(0.8000);transform-origin:0 0;"><span class="rub">P</span></div>
<div class="t" style="left:286.25px;top:6.93px;font-size:10px;color:#151515;transform:scaleX(0.9300);transform-origin:100% 0;">10 000,00</div>
<div class="t" style="left:451.66px;top:6.93px;font-size:10px;color:#151515;transform:scaleX(0.8000);transform-origin:0 0;"><span class="rub">P</span></div>
<div class="t" style="left:418.75px;top:6.93px;font-size:10px;color:#151515;transform:scaleX(0.9300);transform-origin:100% 0;">108,53</div>
<div class="t" style="left:569.66px;top:6.93px;font-size:10px;color:#151515;transform:scaleX(0.8000);transform-origin:0 0;"><span class="rub">P</span></div>
<div class="t" style="left:542.31px;top:6.93px;font-size:10px;color:#151515;transform:scaleX(0.9300);transform-origin:100% 0;">62,69</div>
<div class="t" style="left:687.66px;top:6.93px;font-size:10px;color:#151515;transform:scaleX(0.8000);transform-origin:0 0;"><span class="rub">P</span></div>
<div class="t" style="left:660.31px;top:6.93px;font-size:10px;color:#151515;transform:scaleX(0.9300);transform-origin:100% 0;">45,83</div>
<div class="t" style="left:806.96px;top:6.93px;font-size:10px;color:#151515;transform:scaleX(0.8000);transform-origin:0 0;"><span class="rub">P</span></div>
<div class="t" style="left:765.71px;top:6.93px;font-size:10px;color:#151515;transform:scaleX(0.9300);transform-origin:100% 0;">9 937,31</div>
<div class="t" style="left:48.00px;top:29.04px;font-size:10px;color:#151515;transform:scaleX(0.9300);transform-origin:0 0;">2</div>
<div class="t" style="left:106.40px;top:29.04px;font-size:10px;color:#151515;transform:scaleX(0.9300);transform-origin:0 0;">13.04.2024</div>
<div class="t" style="left:333.06px;top:29.04px;font-size:10px;color:#151515;transform:scaleX(0.8000);transform-origin:0 0;"><span class="rub">P</span></div>
<div class="t" style="left:291.81px;top:29.04px;font-size:10px;color:#151515;transform:scaleX(0.9300);transform-origin:100% 0;">9 937,31</div>
<div class="t" style="left:451.66px;top:29.04px;font-size:10px;color:#151515;transform:scaleX(0.8000);transform-origin:0 0;"><span class="rub">P</span></div>
<div class="t" style="left:418.75px;top:29.04px;font-size:10px;color:#151515;transform:scaleX(0.9300);transform-origin:100% 0;">108,53</div>
<div class="t" style="left:569.66px;top:29.04px;font-size:10px;color:#151515;transform:scaleX(0.8000);transform-origin:0 0;"><span class="rub">P</span></div>
<div class="t" style="left:542.31px;top:29.04px;font-size:10px;color:#151515;transform:scaleX(0.9300);transform-origin:100% 0;">62,98</div>
<div class="t" style="left:687.66px;top:29.04px;font-size:10px;color:#151515;transform:scaleX(0.8000);transform-origin:0 0;"><span class="rub">P</span></div>
<div class="t" style="left:660.31px;top:29.04px;font-size:10px;color:#151515;transform:scaleX(0.9300);transform-origin:100% 0;">45,55</div>
<div class="t" style="left:806.96px;top:29.04px;font-size:10px;color:#151515;transform:scaleX(0.8000);transform-origin:0 0;"><span class="rub">P</span></div>
<div class="t" style="left:765.71px;top:29.04px;font-size:10px;color:#151515;transform:scaleX(0.9300);transform-origin:100% 0;">9 874,33</div>
<div class="a" style="left:46px;top:44.22px;width:768px;height:21.6px;background:#d9d9d9;"></div>
<div class="t" style="left:48.00px;top:51.16px;font-size:10px;color:#151515;transform:scaleX(0.9300);transform-origin:0 0;">3</div>
<div class="t" style="left:106.40px;top:51.16px;font-size:10px;color:#151515;transform:scaleX(0.9300);transform-origin:0 0;">13.05.2024</div>
<div class="t" style="left:333.06px;top:51.16px;font-size:10px;color:#151515;transform:scaleX(0.8000);transform-origin:0 0;"><span class="rub">P</span></div>
<div class="t" style="left:291.81px;top:51.16px;font-size:10px;color:#151515;transform:scaleX(0.9300);transform-origin:100% 0;">9 874,33</div>
<div class="t" style="left:451.66px;top:51.16px;font-size:10px;color:#151515;transform:scaleX(0.8000);transform-origin:0 0;"><span class="rub">P</span></div>
<div class="t" style="left:418.75px;top:51.16px;font-size:10px;color:#151515;transform:scaleX(0.9300);transform-origin:100% 0;">108,53</div>
<div class="t" style="left:569.66px;top:51.16px;font-size:10px;color:#151515;transform:scaleX(0.8000);transform-origin:0 0;"><span class="rub">P</span></div>
<div class="t" style="left:542.31px;top:51.16px;font-size:10px;color:#151515;transform:scaleX(0.9300);transform-origin:100% 0;">63,27</div>
<div class="t" style="left:687.66px;top:51.16px;font-size:10px;color:#151515;transform:scaleX(0.8000);transform-origin:0 0;"><span class="rub">P</span></div>
<div class="t" style="left:660.31px;top:51.16px;font-size:10px;color:#151515;transform:scaleX(0.9300);transform-origin:100% 0;">45,26</div>
<div class="t" style="left:806.96px;top:51.16px;font-size:10px;color:#151515;transform:scaleX(0.8000);transform-origin:0 0;"><span class="rub">P</span></div>
<div class="t" style="left:766.45px;top:51.16px;font-size:10px;color:#151515;transform:scaleX(0.9300);transform-origin:100% 0;">9 811,06</div>
<div class="t" style="left:48.00px;top:73.27px;font-size:10px;color:#151515;transform:scaleX(0.9300);transform-origin:0 0;">4</div>
<div class="t" style="left:106.40px;top:73.27px;font-size:10px;color:#151515;transform:scaleX(0.9300);transform-origin:0 0;">13.06.2024</div>
<div class="t" style="left:333.06px;top:73.27px;font-size:10px;color:#151515;transform:scaleX(0.8000);transform-origin:0 0;"><span class="rub">P</span></div>
<div class="t" style="left:292.55px;top:73.27px;font-size:10px;color:#151515;transform:scaleX(0.9300);transform-origin:100% 0;">9 811,06</div>
<div class="t" style="left:451.66px;top:73.27px;font-size:10px;color:#151515;transform:scaleX(0.8000);transform-origin:0 0;"><span class="rub">P</span></div>
<div class="t" style="left:418.75px;top:73.27px;font-size:10px;color:#151515;transform:scaleX(0.9300);transform-origin:100% 0;">108,53</div>
<div class="t" style="left:569.66px;top:73.27px;font-size:10px;color:#151515;transform:scaleX(0.8000);transform-origin:0 0;"><span class="rub">P</span></div>
<div class="t" style="left:542.31px;top:73.27px;font-size:10px;color:#151515;transform:scaleX(0.9300);transform-origin:100% 0;">63,56</div>
<div class="t" style="left:687.66px;top:73.27px;font-size:10px;color:#151515;transform:scaleX(0.8000);transform-origin:0 0;"><span class="rub">P</span></div>
<div class="t" style="left:660.31px;top:73.27px;font-size:10px;color:#151515;transform:scaleX(0.9300);transform-origin:100% 0;">44,97</div>
<div class="t" style="left:806.96px;top:73.27px;font-size:10px;color:#151515;transform:scaleX(0.8000);transform-origin:0 0;"><span class="rub">P</span></div>
<div class="t" style="left:765.71px;top:73.27px;font-size:10px;color:#151515;transform:scaleX(0.9300);transform-origin:100% 0;">9 747,50</div>
<div class="a" style="left:46px;top:88.44px;width:768px;height:21.6px;background:#d9d9d9;"></div>
<div class="t" style="left:48.00px;top:95.38px;font-size:10px;color:#151515;transform:scaleX(0.9300);transform-origin:0 0;">5</div>
<div class="t" style="left:106.40px;top:95.38px;font-size:10px;color:#151515;transform:scaleX(0.9300);transform-origin:0 0;">13.07.2024</div>
<div class="t" style="left:333.06px;top:95.38px;font-size:10px;color:#151515;transform:scaleX(0.8000);transform-origin:0 0;"><span class="rub">P</span></div>
<div class="t" style="left:291.81px;top:95.38px;font-size:10px;color:#151515;transform:scaleX(0.9300);transform-origin:100% 0;">9 747,50</div>
<div class="t" style="left:451.66px;top:95.38px;font-size:10px;color:#151515;transform:scaleX(0.8000);transform-origin:0 0;"><span class="rub">P</span></div>
<div class="t" style="left:418.75px;top:95.38px;font-size:10px;color:#151515;transform:scaleX(0.9300);transform-origin:100% 0;">108,53</div>
<div class="t" style="left:569.66px;top:95.38px;font-size:10px;color:#151515;transform:scaleX(0.8000);transform-origin:0 0;"><span class="rub">P</span></div>
<div class="t" style="left:542.31px;top:95.38px;font-size:10px;color:#151515;transform:scaleX(0.9300);transform-origin:100% 0;">63,85</div>
<div class="t" style="left:687.66px;top:95.38px;font-size:10px;color:#151515;transform:scaleX(0.8000);transform-origin:0 0;"><span class="rub">P</span></div>
<div class="t" style="left:660.31px;top:95.38px;font-size:10px;color:#151515;transform:scaleX(0.9300);transform-origin:100% 0;">44,68</div>
<div class="t" style="left:806.96px;top:95.38px;font-size:10px;color:#151515;transform:scaleX(0.8000);transform-origin:0 0;"><span class="rub">P</span></div>
<div class="t" style="left:765.71px;top:95.38px;font-size:10px;color:#151515;transform:scaleX(0.9300);transform-origin:100% 0;">9 683,65</div>
<div class="t" style="left:48.00px;top:117.49px;font-size:10px;color:#151515;transform:scaleX(0.9300);transform-origin:0 0;">6</div>
<div class="t" style="left:106.40px;top:117.49px;font-size:10px;color:#151515;transform:scaleX(0.9300);transform-origin:0 0;">13.08.2024</div>
<div class="t" style="left:333.06px;top:117.49px;font-size:10px;color:#151515;transform:scaleX(0.8000);transform-origin:0 0;"><span class="rub">P</span></div>
<div class="t" style="left:291.81px;top:117.49px;font-size:10px;color:#151515;transform:scaleX(0.9300);transform-origin:100% 0;">9 683,65</div>
<div class="t" style="left:451.66px;top:117.49px;font-size:10px;color:#151515;transform:scaleX(0.8000);transform-origin:0 0;"><span class="rub">P</span></div>
<div class="t" style="left:418.75px;top:117.49px;font-size:10px;color:#151515;transform:scaleX(0.9300);transform-origin:100% 0;">108,53</div>
<div class="t" style="left:569.66px;top:117.49px;font-size:10px;color:#151515;transform:scaleX(0.8000);transform-origin:0 0;"><span class="rub">P</span></div>
<div class="t" style="left:542.31px;top:117.49px;font-size:10px;color:#151515;transform:scaleX(0.9300);transform-origin:100% 0;">64,14</div>
<div class="t" style="left:687.66px;top:117.49px;font-size:10px;color:#151515;transform:scaleX(0.8000);transform-origin:0 0;"><span class="rub">P</span></div>
<div class="t" style="left:660.31px;top:117.49px;font-size:10px;color:#151515;transform:scaleX(0.9300);transform-origin:100% 0;">44,38</div>
<div class="t" style="left:806.96px;top:117.49px;font-size:10px;color:#151515;transform:scaleX(0.8000);transform-origin:0 0;"><span class="rub">P</span></div>
<div class="t" style="left:765.71px;top:117.49px;font-size:10px;color:#151515;transform:scaleX(0.9300);transform-origin:100% 0;">9 619,51</div>
<div class="a" style="left:46px;top:132.66px;width:768px;height:21.6px;background:#d9d9d9;"></div>
<div class="t" style="left:48.00px;top:139.60px;font-size:10px;color:#151515;transform:scaleX(0.9300);transform-origin:0 0;">7</div>
<div class="t" style="left:106.40px;top:139.60px;font-size:10px;color:#151515;transform:scaleX(0.9300);transform-origin:0 0;">13.09.2024</div>
<div class="t" style="left:333.06px;top:139.60px;font-size:10px;color:#151515;transform:scaleX(0.8000);transform-origin:0 0;"><span class="rub">P</span></div>
<div class="t" style="left:291.81px;top:139.60px;font-size:10px;color:#151515;transform:scaleX(0.9300);transform-origin:100% 0;">9 619,51</div>
<div class="t" style="left:451.66px;top:139.60px;font-size:10px;color:#151515;transform:scaleX(0.8000);transform-origin:0 0;"><span class="rub">P</span></div>
<div class="t" style="left:418.75px;top:139.60px;font-size:10px;color:#151515;transform:scaleX(0.9300);transform-origin:100% 0;">108,53</div>
<div class="t" style="left:569.66px;top:139.60px;font-size:10px;color:#151515;transform:scaleX(0.8000);transform-origin:0 0;"><span class="rub">P</span></div>
<div class="t" style="left:542.31px;top:139.60px;font-size:10px;color:#151515;transform:scaleX(0.9300);transform-origin:100% 0;">64,44</div>
<div class="t" style="left:687.66px;top:139.60px;font-size:10px;color:#151515;transform:scaleX(0.8000);transform-origin:0 0;"><span class="rub">P</span></div>
<div class="t" style="left:660.31px;top:139.60px;font-size:10px;color:#151515;transform:scaleX(0.9300);transform-origin:100% 0;">44,09</div>
<div class="t" style="left:806.96px;top:139.60px;font-size:10px;color:#151515;transform:scaleX(0.8000);transform-origin:0 0;"><span class="rub">P</span></div>
<div class="t" style="left:765.71px;top:139.60px;font-size:10px;color:#151515;transform:scaleX(0.9300);transform-origin:100% 0;">9 555,07</div>
<div class="t" style="left:48.00px;top:161.71px;font-size:10px;color:#151515;transform:scaleX(0.9300);transform-origin:0 0;">8</div>
<div class="t" style="left:106.40px;top:161.71px;font-size:10px;color:#151515;transform:scaleX(0.9300);transform-origin:0 0;">13.10.2024</div>
<div class="t" style="left:333.06px;top:161.71px;font-size:10px;color:#151515;transform:scaleX(0.8000);transform-origin:0 0;"><span class="rub">P</span></div>
<div class="t" style="left:291.81px;top:161.71px;font-size:10px;color:#151515;transform:scaleX(0.9300);transform-origin:100% 0;">9 555,07</div>
<div class="t" style="left:451.66px;top:161.71px;font-size:10px;color:#151515;transform:scaleX(0.8000);transform-origin:0 0;"><span class="rub">P</span></div>
<div class="t" style="left:418.75px;top:161.71px;font-size:10px;color:#151515;transform:scaleX(0.9300);transform-origin:100% 0;">108,53</div>
<div class="t" style="left:569.66px;top:161.71px;font-size:10px;color:#151515;transform:scaleX(0.8000);transform-origin:0 0;"><span class="rub">P</span></div>
<div class="t" style="left:542.31px;top:161.71px;font-size:10px;color:#151515;transform:scaleX(0.9300);transform-origin:100% 0;">64,73</div>
<div class="t" style="left:687.66px;top:161.71px;font-size:10px;color:#151515;transform:scaleX(0.8000);transform-origin:0 0;"><span class="rub">P</span></div>
<div class="t" style="left:660.31px;top:161.71px;font-size:10px;color:#151515;transform:scaleX(0.9300);transform-origin:100% 0;">43,79</div>
<div class="t" style="left:806.96px;top:161.71px;font-size:10px;color:#151515;transform:scaleX(0.8000);transform-origin:0 0;"><span class="rub">P</span></div>
<div class="t" style="left:765.71px;top:161.71px;font-size:10px;color:#151515;transform:scaleX(0.9300);transform-origin:100% 0;">9 490,34</div>
<div class="a" style="left:46px;top:176.88px;width:768px;height:21.6px;background:#d9d9d9;"></div>
<div class="t" style="left:48.00px;top:183.82px;font-size:10px;color:#151515;transform:scaleX(0.9300);transform-origin:0 0;">9</div>
<div class="t" style="left:106.40px;top:183.82px;font-size:10px;color:#151515;transform:scaleX(0.9300);transform-origin:0 0;">13.11.2024</div>
<div class="t" style="left:333.06px;top:183.82px;font-size:10px;color:#151515;transform:scaleX(0.8000);transform-origin:0 0;"><span class="rub">P</span></div>
<div class="t" style="left:291.81px;top:183.82px;font-size:10px;color:#151515;transform:scaleX(0.9300);transform-origin:100% 0;">9 490,34</div>
<div class="t" style="left:451.66px;top:183.82px;font-size:10px;color:#151515;transform:scaleX(0.8000);transform-origin:0 0;"><span class="rub">P</span></div>
<div class="t" style="left:418.75px;top:183.82px;font-size:10px;color:#151515;transform:scaleX(0.9300);transform-origin:100% 0;">108,53</div>
<div class="t" style="left:569.66px;top:183.82px;font-size:10px;color:#151515;transform:scaleX(0.8000);transform-origin:0 0;"><span class="rub">P</span></div>
<div class="t" style="left:542.31px;top:183.82px;font-size:10px;color:#151515;transform:scaleX(0.9300);transform-origin:100% 0;">65,03</div>
<div class="t" style="left:687.66px;top:183.82px;font-size:10px;color:#151515;transform:scaleX(0.8000);transform-origin:0 0;"><span class="rub">P</span></div>
<div class="t" style="left:660.31px;top:183.82px;font-size:10px;color:#151515;transform:scaleX(0.9300);transform-origin:100% 0;">43,50</div>
<div class="t" style="left:806.96px;top:183.82px;font-size:10px;color:#151515;transform:scaleX(0.8000);transform-origin:0 0;"><span class="rub">P</span></div>
<div class="t" style="left:765.71px;top:183.82px;font-size:10px;color:#151515;transform:scaleX(0.9300);transform-origin:100% 0;">9 425,31</div>
<div class="t" style="left:48.00px;top:205.93px;font-size:10px;color:#151515;transform:scaleX(0.9300);transform-origin:0 0;">10</div>
<div class="t" style="left:106.40px;top:205.93px;font-size:10px;color:#151515;transform:scaleX(0.9300);transform-origin:0 0;">13.12.2024</div>
<div class="t" style="left:333.06px;top:205.93px;font-size:10px;color:#151515;transform:scaleX(0.8000);transform-origin:0 0;"><span class="rub">P</span></div>
<div class="t" style="left:291.81px;top:205.93px;font-size:10px;color:#151515;transform:scaleX(0.9300);transform-origin:100% 0;">9 425,31</div>
<div class="t" style="left:451.66px;top:205.93px;font-size:10px;color:#151515;transform:scaleX(0.8000);transform-origin:0 0;"><span class="rub">P</span></div>
<div class="t" style="left:418.75px;top:205.93px;font-size:10px;color:#151515;transform:scaleX(0.9300);transform-origin:100% 0;">108,53</div>
<div class="t" style="left:569.66px;top:205.93px;font-size:10px;color:#151515;transform:scaleX(0.8000);transform-origin:0 0;"><span class="rub">P</span></div>
<div class="t" style="left:542.31px;top:205.93px;font-size:10px;color:#151515;transform:scaleX(0.9300);transform-origin:100% 0;">65,33</div>
<div class="t" style="left:687.66px;top:205.93px;font-size:10px;color:#151515;transform:scaleX(0.8000);transform-origin:0 0;"><span class="rub">P</span></div>
<div class="t" style="left:660.31px;top:205.93px;font-size:10px;color:#151515;transform:scaleX(0.9300);transform-origin:100% 0;">43,20</div>
<div class="t" style="left:806.96px;top:205.93px;font-size:10px;color:#151515;transform:scaleX(0.8000);transform-origin:0 0;"><span class="rub">P</span></div>
<div class="t" style="left:765.71px;top:205.93px;font-size:10px;color:#151515;transform:scaleX(0.9300);transform-origin:100% 0;">9 359,98</div>
<div class="a" style="left:46px;top:221.1px;width:768px;height:21.6px;background:#d9d9d9;"></div>
<div class="t" style="left:48.00px;top:228.04px;font-size:10px;color:#151515;transform:scaleX(0.9300);transform-origin:0 0;">11</div>
<div class="t" style="left:106.40px;top:228.04px;font-size:10px;color:#151515;transform:scaleX(0.9300);transform-origin:0 0;">13.01.2025</div>
<div class="t" style="left:333.06px;top:228.04px;font-size:10px;color:#151515;transform:scaleX(0.8000);transform-origin:0 0;"><span class="rub">P</span></div>
<div class="t" style="left:291.81px;top:228.04px;font-size:10px;color:#151515;transform:scaleX(0.9300);transform-origin:100% 0;">9 359,98</div>
<div class="t" style="left:451.66px;top:228.04px;font-size:10px;color:#151515;transform:scaleX(0.8000);transform-origin:0 0;"><span class="rub">P</span></div>
<div class="t" style="left:418.75px;top:228.04px;font-size:10px;color:#151515;transform:scaleX(0.9300);transform-origin:100% 0;">108,53</div>
<div class="t" style="left:569.66px;top:228.04px;font-size:10px;color:#151515;transform:scaleX(0.8000);transform-origin:0 0;"><span class="rub">P</span></div>
<div class="t" style="left:542.31px;top:228.04px;font-size:10px;color:#151515;transform:scaleX(0.9300);transform-origin:100% 0;">65,63</div>
<div class="t" style="left:687.66px;top:228.04px;font-size:10px;color:#151515;transform:scaleX(0.8000);transform-origin:0 0;"><span class="rub">P</span></div>
<div class="t" style="left:660.31px;top:228.04px;font-size:10px;color:#151515;transform:scaleX(0.9300);transform-origin:100% 0;">42,90</div>
<div class="t" style="left:806.96px;top:228.04px;font-size:10px;color:#151515;transform:scaleX(0.8000);transform-origin:0 0;"><span class="rub">P</span></div>
<div class="t" style="left:765.71px;top:228.04px;font-size:10px;color:#151515;transform:scaleX(0.9300);transform-origin:100% 0;">9 294,35</div>
</div>
</div>
<div class="a" style="left:46px;top:187px;width:200px;height:68px;overflow:hidden">
<svg style="left:0px;top:0px" width="200" height="80" viewBox="0 0 200 80"><g transform="translate(-46,-187)"><g transform="translate(124.3,188.3) rotate(34)"><rect x="0" y="0" width="21" height="40" fill="#fffdf0" stroke="#fff4c8" stroke-width="1.2"/><rect x="2.6" y="2.6" width="15.8" height="34.8" fill="none" stroke="#f4bc2c" stroke-width="0.9"/><circle cx="10.5" cy="20" r="4.6" fill="#f4bc2c"/><circle cx="10.5" cy="9.3" r="1.7" fill="#f4bc2c"/><circle cx="10.5" cy="30.7" r="1.7" fill="#f4bc2c"/><path d="M2.6 2.6 h4.6 a4.6 4.6 0 0 1 -4.6 4.6 Z M18.4 2.6 v4.6 a4.6 4.6 0 0 1 -4.6 -4.6 Z M2.6 37.4 v-4.6 a4.6 4.6 0 0 1 4.6 4.6 Z M18.4 37.4 h-4.6 a4.6 4.6 0 0 1 4.6 -4.6 Z" fill="#f4bc2c"/></g><g transform="translate(137.6,200.4) rotate(51)"><rect x="0" y="0" width="21" height="40" fill="#fffdf0" stroke="#fff4c8" stroke-width="1.2"/><rect x="2.6" y="2.6" width="15.8" height="34.8" fill="none" stroke="#ea8a3c" stroke-width="0.9"/><circle cx="10.5" cy="20" r="4.6" fill="#ea8a3c"/><circle cx="10.5" cy="9.3" r="1.7" fill="#ea8a3c"/><circle cx="10.5" cy="30.7" r="1.7" fill="#ea8a3c"/><path d="M2.6 2.6 h4.6 a4.6 4.6 0 0 1 -4.6 4.6 Z M18.4 2.6 v4.6 a4.6 4.6 0 0 1 -4.6 -4.6 Z M2.6 37.4 v-4.6 a4.6 4.6 0 0 1 4.6 4.6 Z M18.4 37.4 h-4.6 a4.6 4.6 0 0 1 4.6 -4.6 Z" fill="#ea8a3c"/></g><g transform="translate(146.3,215.2) rotate(72)"><rect x="0" y="0" width="21" height="40" fill="#fbfff4" stroke="#f0fbe0" stroke-width="1.2"/><rect x="2.6" y="2.6" width="15.8" height="34.8" fill="none" stroke="#45ab4c" stroke-width="0.9"/><circle cx="10.5" cy="20" r="4.6" fill="#45ab4c"/><circle cx="10.5" cy="9.3" r="1.7" fill="#45ab4c"/><circle cx="10.5" cy="30.7" r="1.7" fill="#45ab4c"/><path d="M2.6 2.6 h4.6 a4.6 4.6 0 0 1 -4.6 4.6 Z M18.4 2.6 v4.6 a4.6 4.6 0 0 1 -4.6 -4.6 Z M2.6 37.4 v-4.6 a4.6 4.6 0 0 1 4.6 4.6 Z M18.4 37.4 h-4.6 a4.6 4.6 0 0 1 4.6 -4.6 Z" fill="#45ab4c"/></g><path d="M80 226 L102 209.5 L124.3 226 V260 H80 Z" fill="#dad7d6"/><rect x="95.3" y="237.9" width="13.6" height="20" fill="#6a6a6a"/><path d="M75.8 226 L101.9 207.2 L129.2 226" fill="none" stroke="#df2340" stroke-width="4.5" stroke-linecap="round" stroke-linejoin="miter"/></g></svg>
</div>
<div class="a" style="left:36px;top:258px;width:144px;height:101px;background:#ffffe1;border:1px solid #b4b4b4;box-shadow:1px 1px 2px rgba(0,0,0,0.25)"></div>
<div class="t" style="left:41.00px;top:262.91px;font-size:10.5px;color:#727272;transform:scaleX(0.9487);transform-origin:0 0;">Составьте график</div>
<div class="t" style="left:41.00px;top:276.41px;font-size:10.5px;color:#727272;">погашения кредита с</div>
<div class="t" style="left:41.00px;top:289.91px;font-size:10.5px;color:#727272;">помощью этого кредитного</div>
<div class="t" style="left:41.00px;top:303.41px;font-size:10.5px;color:#727272;transform:scaleX(0.9347);transform-origin:0 0;">калькулятора. Сумма</div>
<div class="t" style="left:41.00px;top:316.91px;font-size:10.5px;color:#727272;transform:scaleX(0.9782);transform-origin:0 0;">процентов и общая сумма</div>
<div class="t" style="left:41.00px;top:330.41px;font-size:10.5px;color:#727272;transform:scaleX(0.9576);transform-origin:0 0;">платежей рассчитываются</div>
<div class="t" style="left:41.00px;top:343.91px;font-size:10.5px;color:#727272;transform:scaleX(0.9713);transform-origin:0 0;">автоматически.</div>
<div class="a" style="left:0px;top:664.5px;width:1280px;height:20px;background:#e6e6e6;"></div>
<div class="a" style="left:0px;top:664.5px;width:1263px;height:1px;background:#ababab;"></div>
<svg style="left:19px;top:670px" width="6" height="8" viewBox="0 0 6 8"><path d="M5 0.8 L1.2 4 L5 7.2 Z" fill="#c2c2c2"/></svg>
<svg style="left:37px;top:670px" width="6" height="8" viewBox="0 0 6 8"><path d="M1 0.8 L4.8 4 L1 7.2 Z" fill="#c2c2c2"/></svg>
<div class="a" style="left:70px;top:665px;width:155px;height:17px;background:linear-gradient(#ffffff 35%,#d6ecd2 100%);border-left:1px solid #cfcfcf;border-right:1px solid #cfcfcf"></div>
<div class="a" style="left:70px;top:680.5px;width:155px;height:2px;background:#217346;"></div>
<div class="t" style="left:74.69px;top:666.84px;font-size:12px;color:#217346;font-weight:bold;transform:scaleX(0.9546);transform-origin:50% 0;">Кредитный калькулятор</div>
<svg style="left:248px;top:668px" width="13" height="13" viewBox="0 0 13 13"><circle cx="6.5" cy="6.5" r="5.6" fill="none" stroke="#777" stroke-width="1"/><path d="M3.5 6.5 H9.5 M6.5 3.5 V9.5" stroke="#777" stroke-width="1.1"/></svg>
<div class="a" style="left:766.5px;top:669px;width:1.6px;height:1.6px;background:#aaa;"></div>
<div class="a" style="left:766.5px;top:672.5px;width:1.6px;height:1.6px;background:#aaa;"></div>
<div class="a" style="left:766.5px;top:676px;width:1.6px;height:1.6px;background:#aaa;"></div>
<div class="a" style="left:779px;top:669px;width:483px;height:12px;background:#d4d4d4;"></div>
<div class="a" style="left:779px;top:669px;width:12px;height:12px;background:#fff;border:1px solid #c4c4c4"></div>
<svg style="left:782px;top:671.5px" width="5" height="7" viewBox="0 0 5 7"><path d="M4.2 0.5 L0.8 3.5 L4.2 6.5 Z" fill="#555"/></svg>
<div class="a" style="left:791.5px;top:669px;width:427px;height:12px;background:#fff;border:1px solid #c4c4c4"></div>
<div class="a" style="left:1249px;top:669px;width:12px;height:12px;background:#fff;border:1px solid #c4c4c4"></div>
<svg style="left:1253px;top:671.5px" width="5" height="7" viewBox="0 0 5 7"><path d="M0.8 0.5 L4.2 3.5 L0.8 6.5 Z" fill="#555"/></svg>
<div class="a" style="left:1263px;top:171px;width:17px;height:494px;background:#e6e6e6;"></div>
<div class="a" style="left:1264.5px;top:186px;width:12px;height:467px;background:#d4d4d4;"></div>
<div class="a" style="left:1264.5px;top:174px;width:12px;height:11px;background:#fff;border:1px solid #c4c4c4"></div>
<svg style="left:1267.5px;top:177px" width="7" height="5" viewBox="0 0 7 5"><path d="M0.5 4.2 L3.5 0.8 L6.5 4.2 Z" fill="#555"/></svg>
<div class="a" style="left:1264.5px;top:186.5px;width:12px;height:13px;background:#fff;border:1px solid #c4c4c4"></div>
<div class="a" style="left:1264.5px;top:653px;width:12px;height:11px;background:#fff;border:1px solid #c4c4c4"></div>
<svg style="left:1267.5px;top:656px" width="7" height="5" viewBox="0 0 7 5"><path d="M0.5 0.8 L3.5 4.2 L6.5 0.8 Z" fill="#555"/></svg>
<div class="a" style="left:1262px;top:187px;width:1px;height:478px;background:#c6c6c6;"></div>
<div class="a" style="left:0px;top:684px;width:1280px;height:19px;background:#f3f2f1;"></div>
<div class="t" style="left:7.00px;top:688.31px;font-size:10.5px;color:#555;transform:scaleX(0.8636);transform-origin:0 0;">Готово</div>
<div class="a" style="left:1017px;top:685px;width:33px;height:17px;background:#c8c6c4;"></div>
<svg style="left:1028px;top:689px" width="11" height="10" viewBox="0 0 11 10"><rect x="0.5" y="0.5" width="10" height="9" fill="none" stroke="#555" stroke-width="1"/><path d="M0.5 3.5 H10.5 M0.5 6.5 H10.5 M4 0.5 V9.5 M7.5 0.5 V9.5" stroke="#555" stroke-width="0.9"/></svg>
<svg style="left:1062px;top:689px" width="11" height="10" viewBox="0 0 11 10"><rect x="0.5" y="0.5" width="10" height="9" fill="none" stroke="#555" stroke-width="1"/><rect x="2.8" y="2.5" width="5.4" height="5" fill="#dcdcdc" stroke="#555" stroke-width="0.9"/></svg>
<svg style="left:1096px;top:689px" width="11" height="10" viewBox="0 0 11 10"><rect x="0.5" y="0.5" width="10" height="9" fill="none" stroke="#555" stroke-width="1"/><path d="M3.5 0.5 V5.5 H7.5 V0.5" fill="none" stroke="#555" stroke-width="1"/></svg>
<div class="a" style="left:1123px;top:693.5px;width:6px;height:1px;background:#555;"></div>
<div class="a" style="left:1134px;top:693.5px;width:83px;height:1px;background:#b8b8b8;"></div>
<div class="a" style="left:1173.5px;top:689px;width:3.5px;height:10px;background:#666;"></div>
<div class="a" style="left:1221px;top:693.5px;width:7px;height:1px;background:#555;"></div>
<div class="a" style="left:1224px;top:690.5px;width:1px;height:7px;background:#555;"></div>
<div class="t" style="left:1239.00px;top:688.31px;font-size:10.5px;color:#555;transform:scaleX(0.7725);transform-origin:0 0;">100 %</div>
<div class="a" style="left:0px;top:29px;width:1px;height:674px;background:#5a9475;"></div>
<div class="a" style="left:1278.5px;top:29px;width:1.5px;height:674px;background:#94b8a4;"></div>
<div class="a" style="left:0px;top:702px;width:1280px;height:1px;background:#5f8f76;"></div>
</div></body></html>
